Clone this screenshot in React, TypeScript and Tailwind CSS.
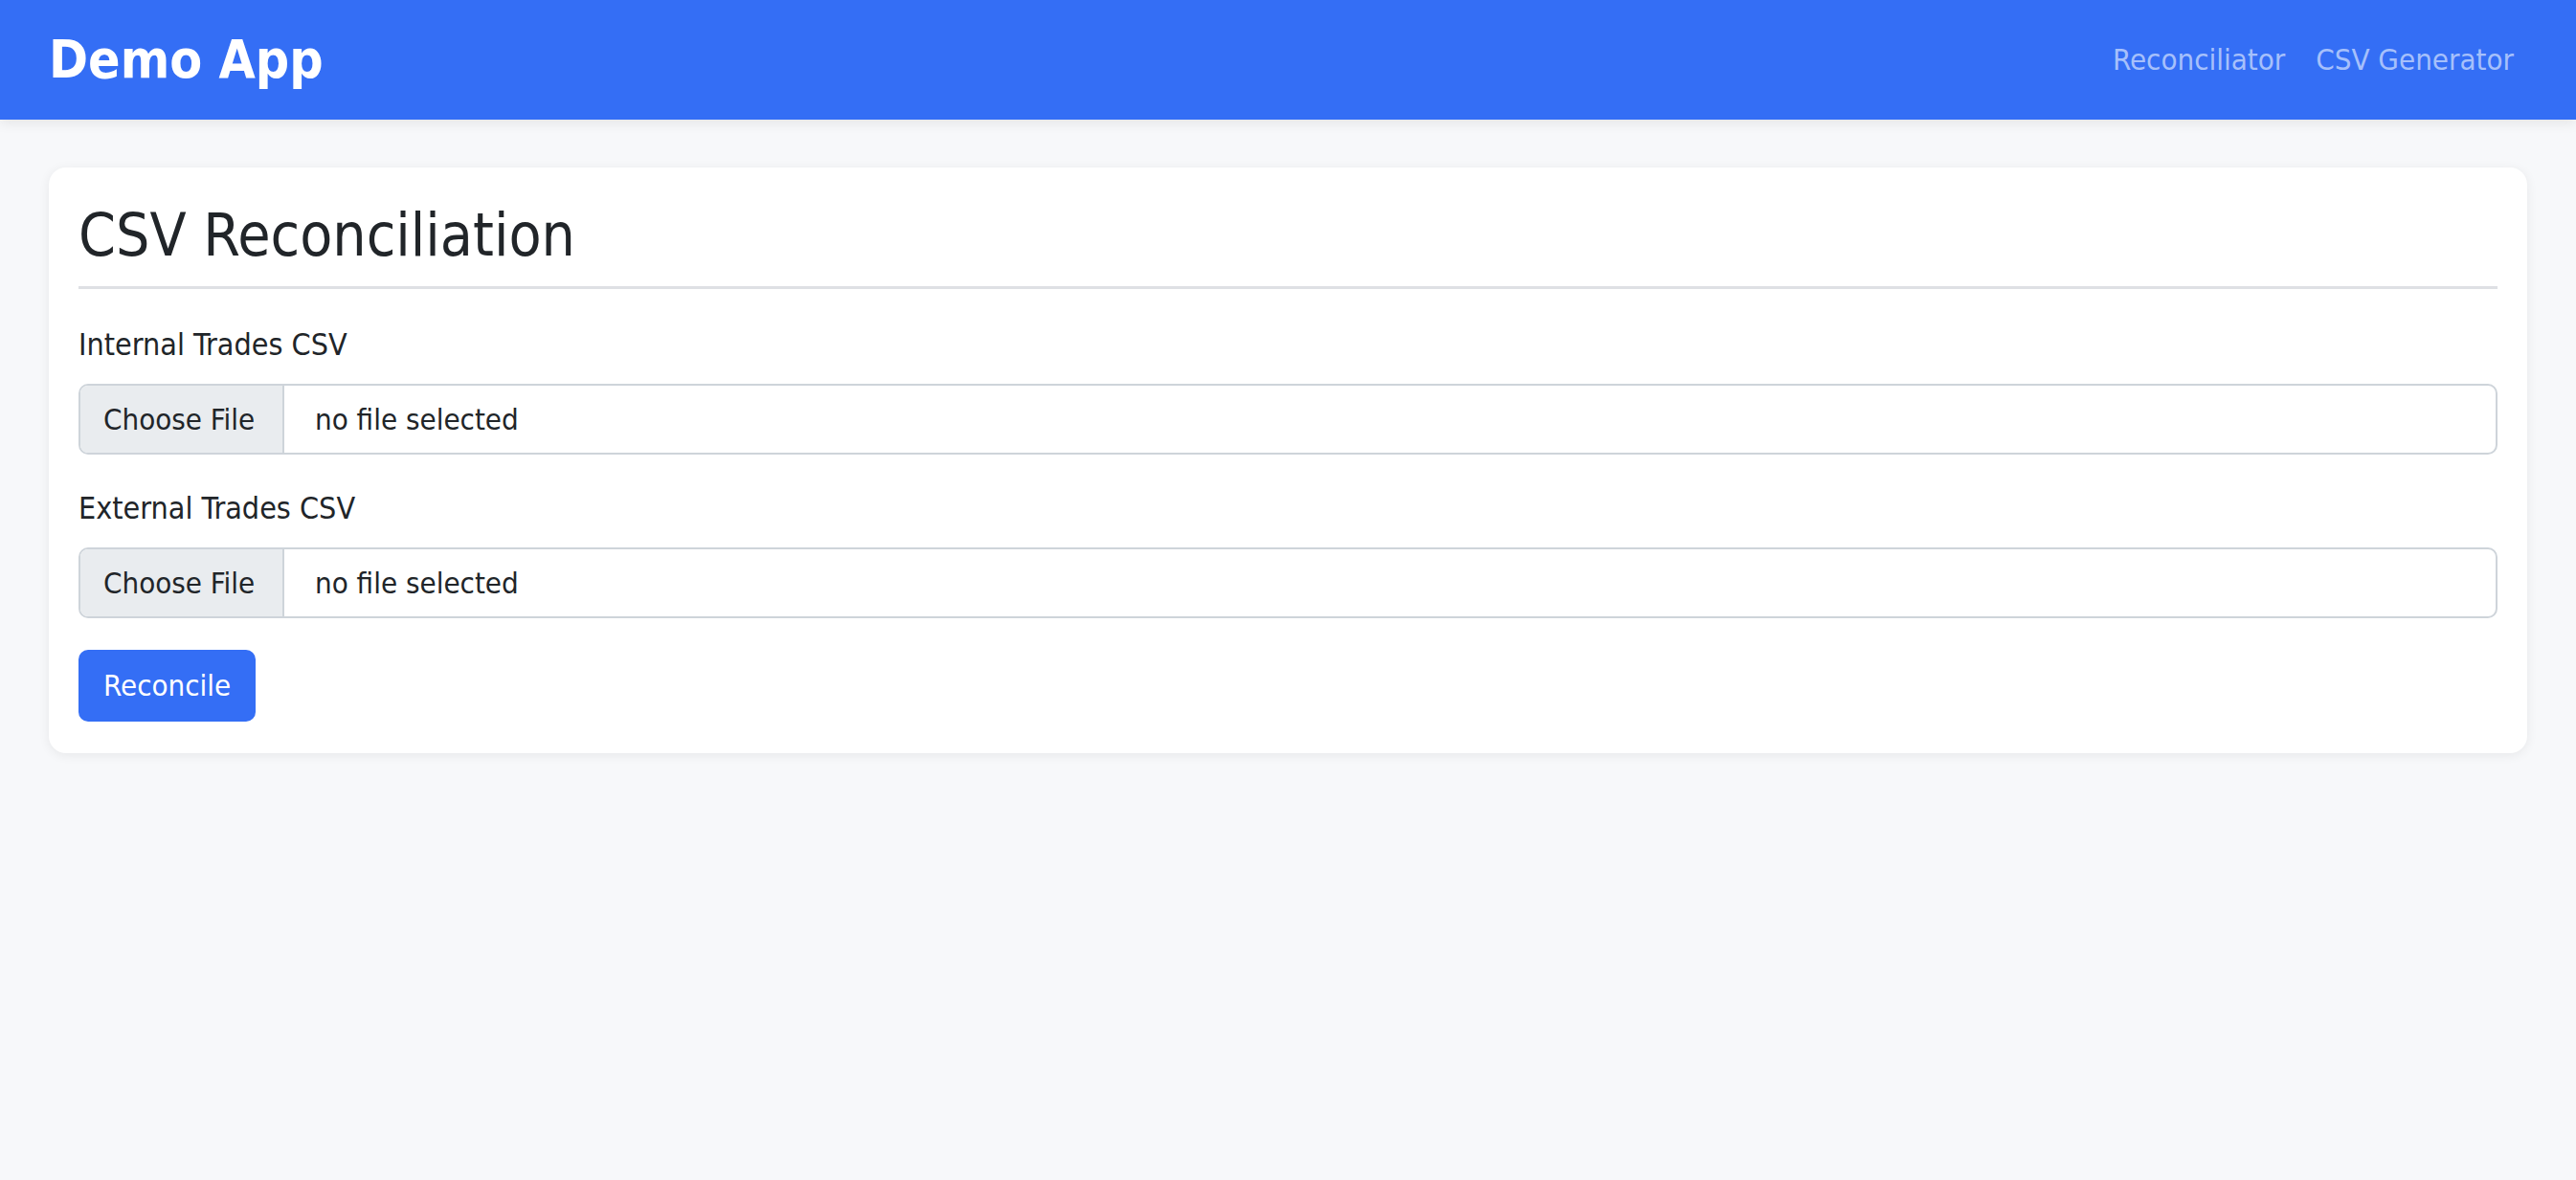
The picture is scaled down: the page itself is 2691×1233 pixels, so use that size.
import React from 'react'

const font = { fontFamily: '"DejaVu Sans Condensed", "DejaVu Sans", sans-serif' }

function FileField({ label }: { label: string }) {
  return (
    <div>
      <label className="block text-[32px] leading-[42px] text-[#212529]">{label}</label>
      <div className="mt-[20px] flex h-[74px] items-stretch overflow-hidden rounded-[10px] border-2 border-[#ced4da] bg-white text-[31px] text-[#212529]">
        <span className="flex w-[213px] items-center border-r-2 border-[#ced4da] bg-[#e9ecef] pl-[24px]">Choose File</span>
        <span className="flex items-center pl-[32px]">no file selected</span>
      </div>
    </div>
  )
}

export default function App() {
  return (
    <div className="min-h-[1233px] bg-[#f7f8fa]" style={font}>
      {/* шапка */}
      <header className="flex h-[125px] items-center justify-between bg-[#346ef5] pl-[51px] pr-[51px] shadow-[0_4px_12px_rgba(0,0,0,0.08)]">
        <span className="text-[55px] font-bold text-white">Demo App</span>
        <nav className="flex items-center text-[31px] text-[#a6c0fb]">
          <a className="px-[16px]">Reconciliator</a>
          <a className="pl-[16px] pr-[14px]">CSV Generator</a>
        </nav>
      </header>

      <main className="px-[51px] pt-[50px]">
        <div className="rounded-[18px] bg-white px-[31px] pt-[30px] pb-[33px] shadow-[0_2px_12px_rgba(0,0,0,0.07)]">
          <h1 className="border-b-[3px] border-[#dee0e4] pb-[12px] text-[62px] leading-[82px] text-[#212529]">
            CSV Reconciliation
          </h1>
          <div className="mt-[37px] flex flex-col gap-[35px]">
            <FileField label="Internal Trades CSV" />
            <FileField label="External Trades CSV" />
          </div>
          <button className="mt-[33px] h-[75px] rounded-[10px] bg-[#346ef5] px-[26px] text-[31px] text-white">
            Reconcile
          </button>
        </div>
      </main>
    </div>
  )
}
